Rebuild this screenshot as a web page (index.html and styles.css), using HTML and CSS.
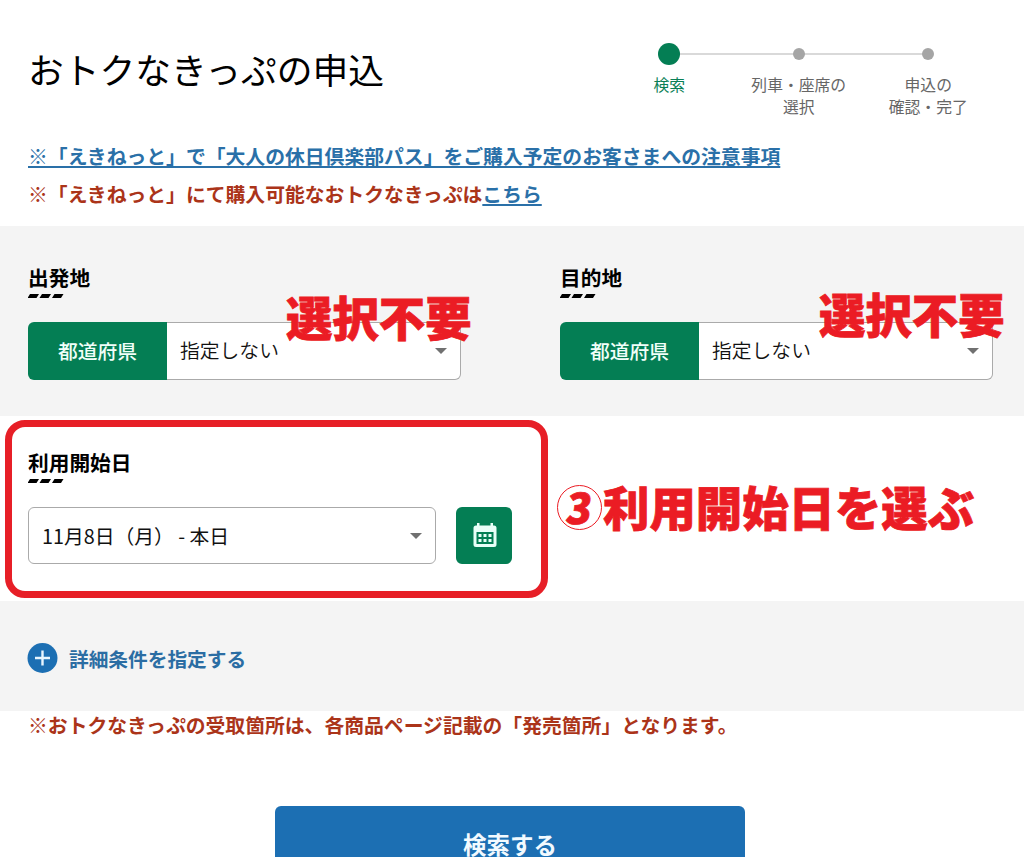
FILE: index.html
```html
<!DOCTYPE html>
<html lang="ja">
<head>
<meta charset="utf-8">
<title>おトクなきっぷの申込</title>
<link rel="stylesheet" href="styles.css">
</head>
<body>
<header class="header">
  <h1 class="title">おトクなきっぷの申込</h1>
  <ol class="steps">
    <li class="step step-active"><span class="dot-row"><i class="dot"></i></span><span>検索</span></li>
    <li class="step"><span class="dot-row"><i class="dot"></i></span><span>列車・座席の<br>選択</span></li>
    <li class="step"><span class="dot-row"><i class="dot"></i></span><span>申込の<br>確認・完了</span></li>
  </ol>
</header>
<div class="notes">
  <p class="note"><a href="#">※「えきねっと」で「大人の休日倶楽部パス」をご購入予定のお客さまへの注意事項</a></p>
  <p class="note">※「えきねっと」にて購入可能なおトクなきっぷは<a href="#">こちら</a></p>
</div>
<section class="places">
  <div class="place">
    <h2 class="heading">出発地</h2>
    <svg class="dashes" viewBox="0 0 36 4"><path d="M2 0h9l-2.500 4h-9zM14 0h9l-2.500 4h-9zM26.500 0h9l-2.500 4h-9z"/></svg>
    <div class="select-group"><span class="select-label">都道府県</span><div class="select"><span>指定しない</span><i class="caret"></i></div></div>
    <span class="callout callout-from">選択不要</span>
  </div>
  <div class="place">
    <h2 class="heading">目的地</h2>
    <svg class="dashes" viewBox="0 0 36 4"><path d="M2 0h9l-2.500 4h-9zM14 0h9l-2.500 4h-9zM26.500 0h9l-2.500 4h-9z"/></svg>
    <div class="select-group"><span class="select-label">都道府県</span><div class="select"><span>指定しない</span><i class="caret"></i></div></div>
    <span class="callout callout-to">選択不要</span>
  </div>
</section>
<section class="date">
  <h2 class="heading">利用開始日</h2>
  <svg class="dashes" viewBox="0 0 36 4"><path d="M2 0h9l-2.500 4h-9zM14 0h9l-2.500 4h-9zM26.500 0h9l-2.500 4h-9z"/></svg>
  <div class="date-row">
    <div class="date-select"><span>11月8日（月） - 本日</span><i class="caret"></i></div>
    <button class="calendar" aria-label="カレンダー">
      <svg width="24" height="25" viewBox="0 0 24 25"><path fill="#e9fff8" fill-rule="evenodd" d="M4 0h2.500v2.500h11V0H20v2.500h1A2.500 2.500 0 0 1 23.500 5v16.500A2.500 2.500 0 0 1 21 24H3a2.500 2.500 0 0 1-2.500-2.500V5A2.500 2.500 0 0 1 3 2.500h1zM3.500 9v12h17V9z"/><path fill="#e9fff8" d="M5.500 11h3v3h-3zM10.500 11h3v3h-3zM15.500 11h3v3h-3zM5.500 16h3v3h-3zM10.500 16h3v3h-3zM15.500 16h3v3h-3z"/></svg>
    </button>
  </div>
  <div class="frame"></div>
  <span class="callout callout-date"><span class="ring"><span class="ring-number">3</span></span>利用開始日を選ぶ</span>
</section>
<section class="details">
  <svg width="30" height="30" viewBox="0 0 30 30"><circle cx="14.500" cy="15" r="15" fill="#1c6fb3"/><path d="M7 15h15M14.500 7.500v15" stroke="#e8f6ff" stroke-width="2.400"/></svg>
  <span>詳細条件を指定する</span>
</section>
<p class="note pickup">※おトクなきっぷの受取箇所は、各商品ページ記載の「発売箇所」となります。</p>
<button class="search">検索する</button>
</body>
</html>
```
FILE: styles.css
```css
* { box-sizing: border-box; }
body {
  margin: 0;
  height: 857px;
  overflow: hidden;
  background: #fff;
  color: #111;
  font-family: "Noto Sans CJK JP", sans-serif;
}
h1, h2, p, ol { margin: 0; padding: 0; }
.header {
  display: flex;
  justify-content: space-between;
  height: 137px;
  padding: 40px 31px 0 28px;
}
.title { font-size: 35.750px; font-weight: 400; line-height: 57px; color: #000; }
.steps { display: flex; list-style: none; }
.step {
  position: relative;
  width: 129.500px;
  text-align: center;
  font-size: 15.800px;
  line-height: 22px;
  color: #666;
}
.dot-row { display: flex; align-items: center; justify-content: center; height: 28px; margin-bottom: 6px; }
.dot { position: relative; z-index: 1; width: 12px; height: 12px; border-radius: 50%; background: #a5a5a5; }
.step-active { color: #0b7f56; }
.step-active .dot { width: 22px; height: 22px; background: #047e54; }
.step:not(:last-child)::before {
  content: "";
  position: absolute;
  top: 13px;
  left: 50%;
  width: 100%;
  height: 2px;
  background: #d9d9d9;
}
.notes { height: 89px; padding: 0 28px; }
.note { font-size: 19.820px; font-weight: 700; line-height: 38px; color: #ab3419; white-space: nowrap; }
.note a { color: #2a70a8; text-decoration-thickness: 2px; text-underline-offset: 2px; }
.places {
  display: grid;
  grid-template-columns: 433px 433px;
  column-gap: 99px;
  height: 190px;
  padding: 36px 28px 0;
  background: #f4f4f4;
}
.place { position: relative; }
.heading { font-size: 20.700px; line-height: 30px; font-weight: 700; color: #000; }
.dashes { display: block; width: 36px; height: 4px; margin-top: 2px; }
.select-group { display: flex; height: 58px; margin-top: 24px; }
.select-label {
  width: 139px;
  border-radius: 6px 0 0 6px;
  background: #047e54;
  color: #f0fff9;
  font-size: 19.800px;
  font-weight: 500;
  line-height: 58px;
  text-align: center;
}
.select, .date-select {
  display: flex;
  align-items: center;
  justify-content: space-between;
  border: 1px solid #aaa;
  background: #fff;
  font-size: 19.800px;
}
.select { flex: 1; padding: 0 13px 3px; border-left: 0; border-radius: 0 6px 6px 0; font-weight: 350; }
.caret { border: 6.500px solid transparent; border-top-color: #707070; border-bottom: 0; }
.select .caret { margin-top: 3px; }
.callout {
  position: absolute;
  color: #eb1c24;
  font-size: 46.400px;
  font-weight: 900;
  line-height: 50px;
  white-space: nowrap;
  -webkit-text-stroke: 0.800px #eb1c24;
}
.callout-from { left: 258px; top: 29px; }
.callout-to { left: 259px; top: 26px; }
.date { position: relative; height: 185px; padding: 31px 28px 0; }
.date-row { display: flex; gap: 20px; margin-top: 24px; }
.date-select { width: 408px; height: 57px; padding: 0 13px; border-radius: 6px; }
.calendar {
  display: flex;
  align-items: center;
  justify-content: center;
  width: 56px;
  height: 57px;
  padding: 0 0 0 1px;
  border: 0;
  border-radius: 6px;
  background: #047e54;
}
.frame {
  position: absolute;
  left: 5px;
  top: 4px;
  width: 543px;
  height: 178px;
  border: 7.500px solid #e71f27;
  border-radius: 20px;
}
.callout-date { display: flex; align-items: center; left: 557px; top: 65px; }
.ring {
  width: 45px;
  height: 45px;
  margin: 2px 1px 0 0;
  border: 1.500px solid #eb1c24;
  border-radius: 50%;
  font-size: 42px;
  line-height: 40px;
  text-align: center;
}
.ring-number { display: inline-block; transform: skewX(-8deg); }
.details {
  display: flex;
  align-items: center;
  gap: 11px;
  height: 110px;
  padding: 4px 28px 0;
  background: #f4f4f4;
  color: #2b6da3;
  font-size: 19.700px;
  font-weight: 700;
}
.details svg { overflow: visible; }
.pickup { height: 95px; padding-left: 28px; line-height: 27px; }
.search {
  display: block;
  width: 470px;
  height: 76px;
  margin-left: 275px;
  padding: 0;
  border: 0;
  border-radius: 6px;
  background: #1c6fb3;
  color: #f2faff;
  font: 700 23.500px/72px "Noto Sans CJK JP", sans-serif;
}
```
